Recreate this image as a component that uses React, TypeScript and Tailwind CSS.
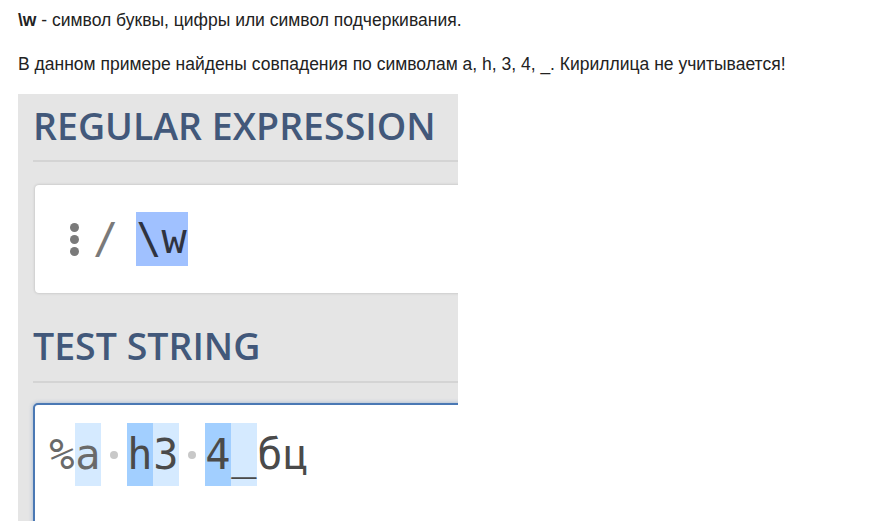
const mono = { fontFamily: '"DejaVu Sans Mono", "Liberation Mono", monospace' };

type Cell = { ch: string; hl?: "light" | "dark"; dim?: boolean };

const testCells: Cell[] = [
  { ch: "%", dim: true },
  { ch: "a", hl: "light", dim: true },
  { ch: " " },
  { ch: "h", hl: "dark" },
  { ch: "3", hl: "light" },
  { ch: " " },
  { ch: "4", hl: "dark" },
  { ch: "_", hl: "light" },
  { ch: "б" },
  { ch: "ц" },
];

function SpaceDot() {
  return (
    <span className="inline-flex h-full w-[26px] items-center justify-center">
      <span className="block h-[8px] w-[8px] rounded-full bg-[#c8c8c8]" />
    </span>
  );
}

function Heading({ children }: { children: string }) {
  return (
    <h2 className="font-['Open_Sans',sans-serif] text-[37.5px] font-semibold leading-[40px] text-[#42587a]">
      {children}
    </h2>
  );
}

export default function App() {
  return (
    <div className="min-h-[521px] bg-white px-[18px] pt-[8px] font-['Liberation_Sans',Arial,sans-serif] text-[17.5px] leading-[24px] text-[#222]">
      <p>
        <b>\w</b> - символ буквы, цифры или символ подчеркивания.
      </p>
      <p className="mt-[20px]">
        В данном примере найдены совпадения по символам a, h, 3, 4, _. Кириллица не учитывается!
      </p>

      <div className="mt-[18px] h-[427px] w-[440px] overflow-hidden bg-[#e5e5e5] pl-[15px] pt-[12px]">
        <Heading>REGULAR EXPRESSION</Heading>
        <div className="mt-[14px] h-[2px] w-[500px] bg-[#d4d4d4]" />

        <div className="ml-[2px] mt-[23px] flex h-[108px] w-[500px] items-center rounded-[4px] bg-white pl-[35px] shadow-[0_0_3px_rgba(0,0,0,0.22)]">
          <span className="flex flex-col gap-[3px]">
            <span className="block h-[9px] w-[9px] rounded-full bg-[#7a7a7a]" />
            <span className="block h-[9px] w-[9px] rounded-full bg-[#7a7a7a]" />
            <span className="block h-[9px] w-[9px] rounded-full bg-[#7a7a7a]" />
          </span>
          <span className="ml-[14px] text-[42px] leading-[54px] text-[#7a7a7a]" style={mono}>
            /
          </span>
          <span
            className="ml-[18px] bg-[#a0c1ff] pr-[1px] text-[42px] leading-[54px] text-[#2f3340]"
            style={mono}
          >
            \w
          </span>
        </div>

        <div className="mt-[33px]">
          <Heading>TEST STRING</Heading>
        </div>
        <div className="mt-[15px] h-[2px] w-[500px] bg-[#d4d4d4]" />

        <div className="mt-[20px] h-[200px] w-[500px] rounded-tl-[5px] border-2 border-[#4a78b4] bg-white pl-[14px] pt-[18px] shadow-[0_0_4px_rgba(74,120,180,0.45)]">
          <div className="flex h-[63px] text-[42px] leading-[63px]" style={mono}>
            {testCells.map((c, i) =>
              c.ch === " " ? (
                <SpaceDot key={i} />
              ) : (
                <span
                  key={i}
                  className={
                    "inline-block w-[26px] text-center " +
                    (c.hl === "dark" ? "bg-[#a2cfff] " : c.hl === "light" ? "bg-[#d5eaff] " : "") +
                    (c.dim ? "text-[#6a6a6a]" : "text-[#4a4a4a]")
                  }
                >
                  {c.ch}
                </span>
              ),
            )}
          </div>
        </div>
      </div>
    </div>
  );
}
